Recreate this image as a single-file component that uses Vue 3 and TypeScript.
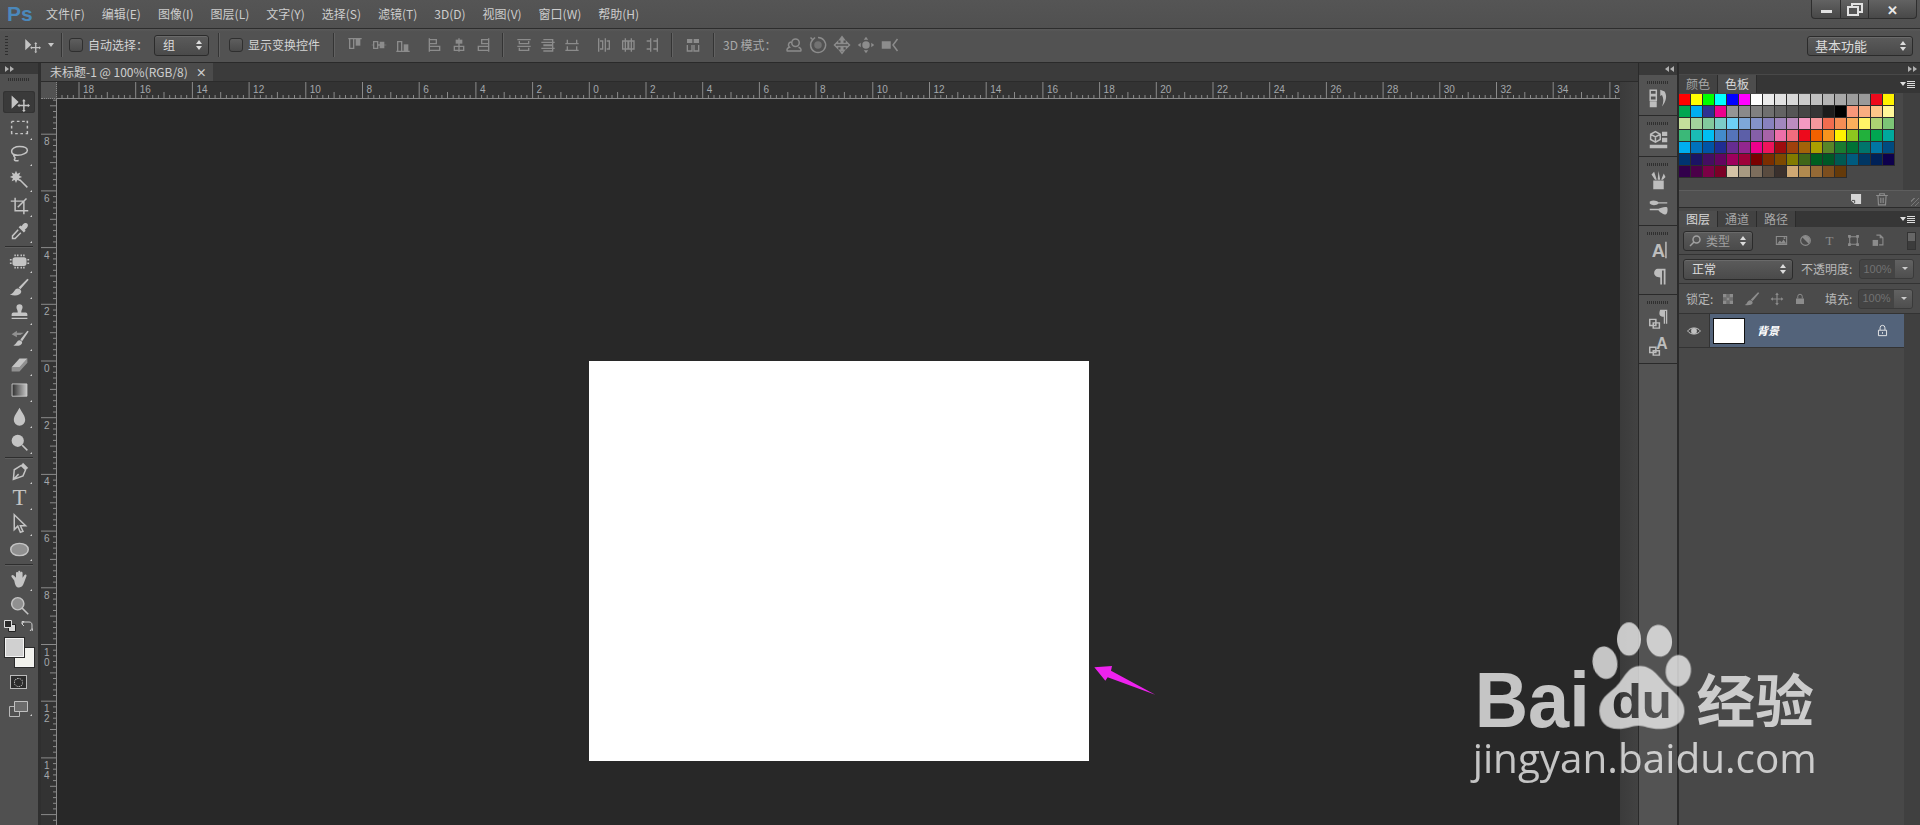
<script setup lang="ts">
import { computed, h } from 'vue'

type Ico = { f?: string; m?: string; s?: string; g?: string; t?: string; ts?: number; ty?: number; serif?: boolean }

const Icon = (p: { i: Ico; size?: number }) => {
  const kids: any[] = []
  if (p.i.g) kids.push(h('path', { d: p.i.g, fill: 'url(#ps-grad)', stroke: '#cfcfcf', 'stroke-width': 1 }))
  if (p.i.m) kids.push(h('path', { d: p.i.m, class: 'm' }))
  if (p.i.f) kids.push(h('path', { d: p.i.f, class: 'f' }))
  if (p.i.s) kids.push(h('path', { d: p.i.s, class: 's' }))
  if (p.i.t)
    kids.push(
      h('text', { x: p.i.ty && p.i.ty < 0 ? 16 : 12, y: Math.abs(p.i.ty ?? 18), 'font-size': p.i.ts ?? 20, class: p.i.serif ? 'tx serif' : 'tx' }, p.i.t)
    )
  return h('svg', { class: 'ico', viewBox: '0 0 24 24', width: p.size ?? 24, height: p.size ?? 24 }, kids)
}
Icon.props = ['i', 'size']

const menus = ['文件(F)', '编辑(E)', '图像(I)', '图层(L)', '文字(Y)', '选择(S)', '滤镜(T)', '3D(D)', '视图(V)', '窗口(W)', '帮助(H)']

const moveIcon: Ico = { f: 'M3 4v15l8-7.5zM17 8l-2 2.5h4zM17 23l-2-2.5h4zM9.5 15.500l2.500-2v4zM24 15.500l-2.500-2v4z', s: 'M17 10v11M11.500 15.500h11' }

const tools: { i: Ico; tri?: boolean; sel?: boolean; sep?: boolean }[] = [
  { i: moveIcon, sel: true },
  { i: { s: 'M3 5h3M9 5h3M15 5h3M20 5h1v2M21 10v3M21 16v3h-2M16 19h-3M10 19H7M4 19H3v-3M3 13v-3M3 7V5' }, tri: true },
  { i: { s: 'M12 4c6 0 9 2 9 4.500S16 14 10 14 3 11.500 3 9s4-5 9-5zM6 13c-2 2 1 3 1 4s-2 2 0 3 3 0 4 0' }, tri: true },
  { i: { f: 'M8 2l1.500 3.500L13 4l-1.500 3.500L15 9l-3.500 1.500L13 14l-3.500-1.500L8 16l-1.500-3.500L3 14l1.500-3.500L1 9l3.500-1.500L3 4l3.500 1.500z', s: 'M12 12l9 9' }, tri: true },
  { i: { s: 'M7 3v15h15M2 7h15v15M20 4L10 14' }, tri: true },
  { i: { f: 'M15 5c2-3 5-3 6-2s1 4-2 6l-1 1 1 1-2 2-6-6 2-2 1 1z', s: 'M10.500 10L4 17v3h3l6.500-6.500' }, tri: true },
  { i: {}, sep: true },
  { i: { f: 'M7 7h10a3 3 0 013 3v4a3 3 0 01-3 3H7a3 3 0 01-3-3v-4a3 3 0 013-3z', s: 'M7 4v2M10 4v2M14 4v2M17 4v2M7 18v2M10 18v2M14 18v2M17 18v2M1 10h2M1 14h2M21 10h2M21 14h2' }, tri: true },
  { i: { f: 'M10 13c-4 0-4 6-9 7 6 2 12 1 13-3 .3-2-2-4-4-4zM11 12l10-10 1.500 1L13 14z' }, tri: true },
  { i: { f: 'M12 2.500a3.500 3.500 0 013.500 3.500c0 2-1.500 3-1.500 6h5a2 2 0 012 2v2H3v-2a2 2 0 012-2h5c0-3-1.500-4-1.500-6A3.500 3.500 0 0112 2.500zM3 18h18v1.500H3z' }, tri: true },
  { i: { f: 'M12 14c-3 0-3 4-7 6 5 1 9 0 10-3 .3-1.500-1.500-3-3-3zM13 13l8-10 1.500 1-7.500 11z', m: 'M3 7l6-4v2.500h8L13 8H9v2.500z' }, tri: true },
  { i: { f: 'M3 15L12 5h9l-9 10z', m: 'M3 15h9v5H3zM12 15l9-10v5l-9 10z' }, tri: true },
  { i: { g: 'M3.500 4.500h17v14h-17z' }, tri: true },
  { i: { f: 'M12 2c3 6 6.500 9 6.500 14a6.500 6.500 0 01-13 0c0-5 3.500-8 6.500-14z' }, tri: true },
  { i: { f: 'M10 3a7 7 0 110 14 7 7 0 010-14z', s: 'M15 15l6 6' }, tri: true },
  { i: {}, sep: true },
  { i: { f: 'M16 2l6 6-3 2-5-5z', s: 'M14 5l5 5-3 7-11 4 1-11zM5.500 20.500L11 15' }, tri: true },
  { i: { t: 'T', ts: 26, ty: 21, serif: true }, tri: true },
  { i: { s: 'M6 2v17l4-4 3 7 3-1-3-6.500h6z' }, tri: true },
  { i: { s: 'M12 5c6 0 10 3 10 7s-4 7-10 7-10-3-10-7 4-7 10-7z', m: 'M12 5c6 0 10 3 10 7s-4 7-10 7-10-3-10-7 4-7 10-7z' }, tri: true },
  { i: {}, sep: true },
  { i: { f: 'M6 13l-3-4c-1-2 1-3 2.500-1.500L8 10V5c0-2 2.500-2 2.500 0v4V3.500c0-2 2.500-2 2.500 0V9V4.500c0-2 2.500-2 2.500 0V10l2-3c1-1.500 3-.5 2.500 1L17 16c-1 3-2.500 5-5.500 5S7 19 6 13z' }, tri: true },
  { i: { m: 'M10 3a7 7 0 110 14 7 7 0 010-14z', s: 'M10 3a7 7 0 110 14 7 7 0 010-14zM15 15l7 7' } }
]

const alignIcons: Ico[] = [
  { s: 'M2 2.500h20M4 3v14h6V3', f: 'M13 3h7v10h-7z' },
  { s: 'M4 7h6v10H4zM10 12h4', f: 'M13 7h7v10h-7zM1 11.500h3v1H1zM20 11.500h3v1h-3z' },
  { s: 'M2 21.500h20M4 21V7h6v14', f: 'M13 11h7v10h-7z' },
  { s: 'M3.500 2v20M4 4h10v6H4M4 14h15v6H4' },
  { s: 'M12 2v20M5 14h14v6H5z', f: 'M7 4h10v6H7z' },
  { s: 'M20.500 2v20M20 4H10v6h10M20 14H5v6h15' }
]
const distIcons: Ico[] = [
  { s: 'M2 4h20M2 14h20M5 6v4h14V6M5 16v4h14v-4' },
  { s: 'M2 8h20M2 17h20M5 4h14v8H5M5 13h14v8H5' },
  { s: 'M2 10h20M2 20h20M5 4v6h14V4M5 14v6h14v-6' },
  { s: 'M4 2v20M14 2v20M6 6h4v12H6M16 6h4v12h-4' },
  { s: 'M8 2v20M17 2v20M4 6h8v12H4zM13 6h8v12h-8z' },
  { s: 'M10 2v20M20 2v20M4 6h6v12H4M14 6h6v12h-6' }
]
const autoAlign: Ico = { f: 'M3 3h8v6H3zM13 3h8v6h-8z', s: 'M3.500 12v9h7v-9M13.500 12v9h7v-9' }
const threeD: Ico[] = [
  { s: 'M14 4a5 5 0 110 10 5 5 0 010-10zM8 8a4 4 0 00-2 7c-3 1-4 3-3 5h18c1-2 0-4-3-5' },
  { s: 'M12 2a10 10 0 11-7 3M2 2l3 3 3-3', m: 'M12 7a5 5 0 110 10 5 5 0 010-10z' },
  { s: 'M12 1l3 4h-2v5h5V8l4 4-4 4v-2h-5v5h2l-3 4-3-4h2v-5H6v2l-4-4 4-4v2h5V5H9z' },
  { f: 'M12 1l3 4H9zM12 23l3-4H9zM1 12l4-3v6zM23 12l-4-3v6zM12 7a5 5 0 110 10 5 5 0 010-10z' },
  { f: 'M1 7h12v10H1z', s: 'M22 4l-6 8 6 8' }
]

const dockGroups: { h: string; items: Ico[] }[] = [
  { h: 'short', items: [{ f: 'M2 15h8v7H2zM14 2l5 2c3 5 2 11-3 17 2-5 2-9 0-13l-2 1z', s: 'M2.500 2.500h7v5h-7zM2.500 9h7v5h-7z' }] },
  { h: 'short', items: [{ s: 'M3 6l5.500-3L14 6v6l-5.500 3L3 12zM3 6l5.500 3L14 6M8.500 9v6', f: 'M16 3h6v5h-6zM16 10h6v5h-6zM2 18h20v4H2z' }] },
  {
    h: 'tall',
    items: [
      { f: 'M6 12h12v10H6zM7 2l3 9H8L4 5zM12 1l2 10h-3zM18 4l2 4-3 3h-2z' },
      { f: 'M2 5c4-2 8-1 10 1h10v1.500H12c-2 2-7 3-10 0zM22 12c1 3 0 8-2 8s-7-3-8-5H2v-1.500h10c2-1 8-3 10-1.500z' }
    ]
  },
  {
    h: 'tall',
    items: [
      { t: 'A', ts: 21, ty: 20, s: 'M20.500 3v19' },
      { f: 'M11 3h9v18h-2V5h-2v16h-2V13c-4 0-7-2-7-5s2-5 4-5z' }
    ]
  },
  {
    h: 'tall',
    items: [
      { f: 'M14 2h8v16h-1.500V3.500h-1V18H18v-8c-4 0-5-2-5-4s1-4 1-4z', s: 'M2 13h7v7H2zM6 17h7v6H6z' },
      { t: 'A', ts: 18, ty: -16, s: 'M2 14h7v6H2zM6 18h7v5H6z' }
    ]
  }
]

const swatches: string[] = (
  '#ff0000,#ffff00,#00ff00,#00ffff,#0000ff,#ff00ff,#ffffff,#ebebeb,#e1e1e1,#d7d7d7,#cbcbcb,#c0c0c0,#b4b4b4,#a8a8a8,#9c9c9c,#9a9a9a,#ed0a1c,#fff200,' +
  '#00a651,#00aeef,#2e3192,#ec008c,#959595,#8a8a8a,#808080,#6f6f6f,#636363,#555555,#464646,#363636,#1c1c1c,#000000,#f7977a,#f9ad81,#fdc68a,#fff79a,' +
  '#c4df9b,#a3d39c,#82ca9d,#7bcdc8,#6ecff6,#7ea7d8,#8493ca,#8882be,#a187be,#bc8dbf,#f49ac2,#f6989d,#f26c4f,#f68e55,#fbaf5c,#fff467,#acd372,#7cc576,' +
  '#3bb878,#1abbb4,#00bff3,#438ccb,#5574b9,#5c5fa8,#855fa8,#a763a8,#ee6fa9,#f16d7e,#ed0a1c,#f26100,#f7941d,#fff200,#8dc61e,#22b13c,#00a651,#00a99d,' +
  '#00aeef,#0072bc,#0054a6,#1f2d92,#662d91,#92278f,#ec008c,#ed145b,#9e0b0f,#a0410d,#a36209,#aba000,#598527,#1a7b30,#007236,#00746b,#0076a3,#004b80,' +
  '#003471,#1b1464,#440e62,#630460,#9e005d,#9e0039,#790000,#7b2e00,#7d4900,#827b00,#406618,#005e20,#005826,#005952,#005b7f,#003663,#002157,#0d004c,' +
  '#32004b,#4b0049,#7b0046,#7a0026,#d4c3a6,#a89a82,#7d6e5d,#594b3f,#3a302c,#cfa873,#b18a4f,#956a36,#7c4e1e,#643a0a'
).split(',')

const filterIcons: Ico[] = [
  { s: 'M2.500 4.500h19v15h-19z', f: 'M4 18l5-6 3 3 4-5 5 8zM16 6h3v3h-3z' },
  { s: 'M12 3a9 9 0 110 18 9 9 0 010-18z', f: 'M12 3a9 9 0 016 15L6 6a9 9 0 016-3z' },
  { t: 'T', ts: 24, ty: 20, serif: true },
  { s: 'M5 5h14v14H5z', f: 'M2 2h5v5H2zM17 2h5v5h-5zM2 17h5v5H2zM17 17h5v5h-5z' },
  { f: 'M3 11h10v11H3z', s: 'M10 2h7l5 5v13h-7M17 2v5h5' }
]
const lockChecker: Ico = { f: 'M2 2h7v7H2zM9 9h6v6H9zM15 2h7v7h-7zM2 15h7v7H2zM15 15h7v7h-7z', m: 'M9 2h6v7H9zM2 9h7v6H2zM15 9h7v6h-7zM9 15h6v7H9z' }
const lockBrush: Ico = { f: 'M9 14c-4 0-4 6-8 7 6 1 11 0 12-3 .3-2-2-4-4-4zM10 13L21 2l2 1-10 12z' }
const lockMove: Ico = { f: 'M12 1l3 4H9zM12 23l3-4H9zM1 12l4-3v6zM23 12l-4-3v6z', s: 'M12 4v16M4 12h16' }
const lockIcon: Ico = { f: 'M4 11h16v11H4z', s: 'M7.500 11V7a4.500 4.500 0 019 0v4' }
const lockLine: Ico = { s: 'M4.500 11.500h15v10h-15zM7.500 11V7a4.500 4.500 0 019 0v4M12 15v3' }
const eye: Ico = { s: 'M1 12c5-7 17-7 22 0-5 7-17 7-22 0z', f: 'M12 7a5 5 0 110 10 5 5 0 010-10z' }

const ZERO = 589.3
const STEP = 5.67
const hTicks = computed(() => {
  let d = ''
  for (let n = -94; n <= 182; n++) {
    const x = ZERO - 57 + n * STEP
    if (x < 0) continue
    const len = n % 10 === 0 ? 17 : n % 5 === 0 ? 6 : 3
    d += `M${x.toFixed(1)} 16V${16 - len}`
  }
  return d + 'M0 16.500H1563'
})
const hLabels = computed(() => {
  const out: { x: number; v: number }[] = []
  for (let v = -18; v <= 36; v += 2) out.push({ x: ZERO - 57 + (v / 2) * 56.7 + 4, v: Math.abs(v) })
  return out
})
const vTicks = computed(() => {
  let d = ''
  for (let n = -46; n <= 82; n++) {
    const y = 361 - 99 + n * STEP
    if (y < 0) continue
    const len = n % 10 === 0 ? 16 : n % 5 === 0 ? 7 : 4
    d += `M16 ${y.toFixed(1)}H${16 - len}`
  }
  return d + 'M15.500 0V726'
})
const vLabels = computed(() => {
  const out: { y: number; c: string }[] = []
  for (let v = -8; v <= 14; v += 2) {
    const y0 = 361 - 99 + (v / 2) * 56.7
    String(Math.abs(v))
      .split('')
      .forEach((c, k) => out.push({ y: y0 + 11 + k * 10, c }))
  }
  return out
})
</script>

<template>
  <div class="ps">
    <svg class="defs" width="0" height="0">
      <defs>
        <linearGradient id="ps-grad" x1="0" x2="1" y1="0" y2="0">
          <stop offset="0" stop-color="#2e2e2e" />
          <stop offset="1" stop-color="#c8c8c8" />
        </linearGradient>
      </defs>
    </svg>

    <header class="menubar">
      <span class="logo">Ps</span>
      <nav class="menus">
        <span v-for="m in menus" :key="m">{{ m }}</span>
      </nav>
      <div class="winbtns">
        <span class="wb first"><i class="min"></i></span>
        <span class="wb"><i class="rest a"></i><i class="rest b"></i></span>
        <span class="wb last close">✕</span>
      </div>
    </header>

    <section class="options">
      <i class="vgrip"></i>
      <span class="optmove"><Icon :i="moveIcon" :size="18" /></span>
      <i class="caret"></i>
      <i class="osep s1"></i>
      <label class="chk"></label>
      <span class="lbl auto">自动选择：</span>
      <span class="combo group">组<i class="updown"></i></span>
      <i class="osep s2"></i>
      <label class="chk c2"></label>
      <span class="lbl">显示变换控件</span>
      <i class="osep s3"></i>
      <span class="btns first">
        <Icon v-for="(a, n) in alignIcons" :key="n" :i="a" :size="16" class="dim" :class="{ wide: n === 2 }" />
      </span>
      <i class="osep s4"></i>
      <span class="btns">
        <Icon v-for="(a, n) in distIcons" :key="n" :i="a" :size="16" class="dim" :class="{ wide: n === 2 }" />
      </span>
      <i class="osep s5"></i>
      <Icon :i="autoAlign" :size="16" class="dim auto-al" />
      <i class="osep s6"></i>
      <span class="lbl three">3D 模式：</span>
      <span class="btns d3">
        <Icon v-for="(a, n) in threeD" :key="n" :i="a" :size="18" class="dim" />
      </span>
      <span class="combo work-combo">基本功能<i class="updown"></i></span>
    </section>

    <main class="work">
      <aside class="toolbar">
        <div class="collapse"><i class="arr r"></i><i class="arr r"></i></div>
        <i class="grip"></i>
        <div class="tools">
          <template v-for="(t, n) in tools" :key="n">
            <i v-if="t.sep" class="tsep"></i>
            <div v-else class="tool" :class="{ sel: t.sel, tri: t.tri }"><Icon :i="t.i" :size="21" /></div>
          </template>
        </div>
        <div class="minis">
          <svg class="mini" viewBox="0 0 12 12" width="12" height="12">
            <path d="M4.500 4.500h7v7h-7z" fill="#d8d8d8" stroke="#222" />
            <path d="M.5.500h7v7h-7z" fill="#2a2a2a" stroke="#ddd" />
          </svg>
          <svg class="mini" viewBox="0 0 12 12" width="12" height="12">
            <path d="M1 4V1.500h2L1 4l2 2M1 2h7c2 0 3 1 3 3v4M9 11l2-2.500M11 11l1-2.500" fill="none" stroke="#cfcfcf" />
          </svg>
        </div>
        <div class="colors">
          <span class="bgc"></span>
          <span class="fgc"></span>
        </div>
        <div class="qmask"><i></i></div>
        <div class="screen tri">
          <svg viewBox="0 0 20 16" width="20" height="16">
            <path d="M.5 5.500h10v10H.5z" fill="none" stroke="#b8b8b8" />
            <path d="M5.500.5h13v10h-13z" fill="#6b6b6b" stroke="#c0c0c0" />
          </svg>
        </div>
      </aside>

      <section class="doc">
        <div class="tabs">
          <div class="tab">未标题-1 @ 100%(RGB/8)<span class="x">×</span></div>
        </div>
        <div class="corner"></div>
        <svg class="hruler" width="1563" height="17">
          <path :d="hTicks" class="tick" />
          <text v-for="l in hLabels" :key="l.x" :x="l.x" y="11" class="rl">{{ l.v }}</text>
        </svg>
        <div class="gutter"></div>
        <svg class="vruler" width="16" height="726">
          <path :d="vTicks" class="tick" />
          <text v-for="l in vLabels" :key="l.y" x="3" :y="l.y" class="rl">{{ l.c }}</text>
        </svg>
        <div class="canvas">
          <div class="sheet"></div>
          <svg class="arrow" viewBox="0 0 360 240" width="120" height="80">
            <polygon points="103,82 156,78 153,92 286,164 143,112 136,122" fill="#ee22ee" />
          </svg>
        </div>
      </section>

      <aside class="dock">
        <div class="dockhead"><i class="arr l"></i><i class="arr l"></i></div>
        <div v-for="(g, n) in dockGroups" :key="n" class="dgroup" :class="g.h">
          <i class="grip"></i>
          <div v-for="(it, k) in g.items" :key="k" class="ditem"><Icon :i="it" :size="21" /></div>
        </div>
      </aside>

      <aside class="panels">
        <div class="phead"><i class="arr r"></i><i class="arr r"></i></div>
        <div class="ptabs">
          <span class="ptab">颜色</span>
          <span class="ptab on">色板</span>
          <span class="pmenu"><i class="caret"></i><i class="bars"></i></span>
        </div>
        <div class="swbody">
          <div class="swgrid">
            <i v-for="(c, n) in swatches" :key="n" :style="{ background: c }"></i>
          </div>
          <div class="scroll"></div>
        </div>
        <div class="swfoot">
          <svg viewBox="0 0 12 12" width="11" height="11"><path d="M0 0h11v11H4L0 7z" fill="#d5d5d5" /><path d="M1 7h3v3" fill="none" stroke="#444" /></svg>
          <Icon :i="{ s: 'M2 6h20M8 6V3h8v3M5 6l1 16h12l1-16M10 10v9M14 10v9' }" :size="14" class="dim" />
          <i class="resize"></i>
        </div>

        <div class="ptabs layers">
          <span class="ptab on">图层</span>
          <span class="ptab">通道</span>
          <span class="ptab">路径</span>
          <span class="pmenu"><i class="caret"></i><i class="bars"></i></span>
        </div>
        <div class="row filter">
          <span class="combo kind">
            <svg viewBox="0 0 12 12" width="12" height="12"><path d="M7.500 1a3.500 3.500 0 110 7 3.500 3.500 0 010-7zM5 7l-4 4" fill="none" stroke="#a0a0a0" stroke-width="1.500" /></svg>
            <b>类型</b><i class="updown"></i>
          </span>
          <span class="ficons"><Icon v-for="(a, n) in filterIcons" :key="n" :i="a" :size="13" class="dim" /></span>
          <span class="toggle"></span>
        </div>
        <div class="row blend">
          <span class="combo mode">正常<i class="updown"></i></span>
          <span class="rlabel op">不透明度:</span>
          <span class="numbox"><b>100%</b><i class="drop"></i></span>
        </div>
        <div class="row lock">
          <span class="rlabel">锁定:</span>
          <span class="lockicons">
            <Icon :i="lockChecker" :size="12" class="dim" />
            <Icon :i="lockBrush" :size="16" class="dim" />
            <Icon :i="lockMove" :size="14" class="dim" />
            <Icon :i="lockIcon" :size="12" class="dim" />
          </span>
          <span class="rlabel fill">填充:</span>
          <span class="numbox"><b>100%</b><i class="drop"></i></span>
        </div>
        <div class="layerarea">
          <div class="layers-list">
            <div class="layer">
              <span class="eyecol"><Icon :i="eye" :size="14" /></span>
              <div class="lrow">
                <span class="thumb"></span>
                <em>背景</em>
                <Icon :i="lockLine" :size="13" class="llock" />
              </div>
            </div>
          </div>
          <div class="scroll"></div>
        </div>
      </aside>
    </main>

    <svg class="wm" width="480" height="235">
      <defs>
        <mask id="pawmask">
          <rect width="480" height="235" fill="#fff" />
          <text x="171.700" y="128.300" font-size="48.700" class="du" textLength="60" lengthAdjust="spacingAndGlyphs">du</text>
        </mask>
      </defs>
      <g class="wmg">
        <text x="34.700" y="136.700" font-size="77.300" class="bai" textLength="115" lengthAdjust="spacingAndGlyphs">Bai</text>
        <g mask="url(#pawmask)">
          <g transform="scale(.3333)">
            <ellipse cx="567" cy="147" rx="36" ry="50" />
            <ellipse cx="658" cy="152" rx="38" ry="48" transform="rotate(-8 658 152)" />
            <ellipse cx="495" cy="218" rx="37" ry="49" transform="rotate(-10 495 218)" />
            <ellipse cx="715" cy="242" rx="38" ry="47" transform="rotate(6 715 242)" />
            <path d="M600 228c40 0 60 40 85 62 30 28 48 45 48 72 0 40-40 55-75 55-30 0-45-10-62-10-20 0-35 10-62 10-35 0-56-22-56-55 0-35 25-50 50-72 25-25 35-62 72-62z" />
          </g>
        </g>
        <text x="256.500" y="132.300" font-size="57.300" class="cn" textLength="117.300" lengthAdjust="spacingAndGlyphs">经验</text>
        <text x="32.700" y="182.500" font-size="39.300" class="url" textLength="344" lengthAdjust="spacingAndGlyphs">jingyan.baidu.com</text>
      </g>
    </svg>
  </div>
</template>

<style>
body { background: #282828; overflow: hidden; }
.ico { display: block; flex: none; overflow: visible; }
.ico .f { fill: currentColor; }
.ico .m { fill: currentColor; opacity: .55; }
.ico .s { fill: none; stroke: currentColor; stroke-width: 1.7; }
.ico .tx { fill: currentColor; text-anchor: middle; font-family: "Liberation Sans", sans-serif; font-weight: 700; }
.ico .tx.serif { font-family: "Liberation Serif", serif; font-weight: 400; }
.ico.dim { color: #8c8c8c; }
.ico.dim .s { stroke-width: 2; }
</style>

<style scoped>
.ps { position: relative; width: 1920px; height: 825px; overflow: hidden; display: flex; flex-direction: column; background: #535353; color: #c8c8c8; font-family: "Noto Sans CJK SC", "Liberation Sans", sans-serif; font-size: 12px; line-height: 1; }
.ps i { display: block; font-style: normal; }
.defs { position: absolute; }

/* menu */
.menubar { height: 28px; flex: none; display: flex; align-items: center; background: linear-gradient(#555, #505050); border-bottom: 1px solid #2d2d2d; }
.logo { margin-left: 7px; width: 33px; font: 700 21px "Liberation Sans", sans-serif; color: #4b88bb; }
.menus { display: flex; gap: 17px; margin-left: 6px; color: #cdcdcd; }
.winbtns { margin-left: auto; margin-right: 3px; align-self: flex-start; display: flex; height: 18px; border: 1px solid #2e2e2e; border-top: 0; border-radius: 0 0 4px 4px; background: linear-gradient(#626262, #484848); }
.wb { position: relative; display: flex; align-items: center; justify-content: center; width: 27px; border-left: 1px solid #2e2e2e; color: #e8e8e8; }
.wb.first { border-left: 0; width: 28px; }
.wb.last { width: 47px; font-size: 13px; font-weight: 700; }
.min { width: 11px; height: 3px; background: #e2e2e2; margin-top: 5px; }
.rest { position: absolute; border: 2px solid #e2e2e2; width: 8px; height: 6px; }
.rest.a { left: 10px; top: 3px; }
.rest.b { left: 6px; top: 6px; background: #555; }

/* options */
.options { height: 34px; flex: none; display: flex; align-items: center; padding: 0 7px 1px 5px; background: linear-gradient(#5a5a5a, #525252 8%, #525252); border-bottom: 1px solid #2a2a2a; box-sizing: border-box; }
.vgrip { width: 3px; height: 19px; background: repeating-linear-gradient(#2f2f2f 0 1px, transparent 1px 3px); }
.optmove { margin-left: 15px; color: #c4c4c4; }
.caret { width: 0; height: 0; border: 3px solid transparent; border-top: 4px solid #c8c8c8; border-bottom: 0; }
.options > .caret { margin-left: 7px; }
.osep { width: 1px; height: 24px; background: #343434; box-shadow: 1px 0 0 #626262; flex: none; }
.s1 { margin-left: 7px; }
.chk { width: 14px; height: 14px; box-sizing: border-box; border: 1px solid #2f2f2f; border-radius: 3px; background: linear-gradient(#5e5e5e, #4a4a4a); margin-left: 7px; }
.chk.c2 { margin-left: 10px; }
.lbl { margin-left: 5px; color: #d4d4d4; white-space: nowrap; }
.lbl.auto { width: 62px; }
.combo { position: relative; box-sizing: border-box; display: flex; align-items: center; border: 1px solid #2b2b2b; border-radius: 3px; background: linear-gradient(#5b5b5b, #4a4a4a); box-shadow: inset 0 1px 0 #6a6a6a; color: #dcdcdc; }
.group { width: 55px; height: 21px; padding-left: 8px; margin-left: 4px; }
.updown { position: absolute; right: 5px; top: 50%; margin-top: -5px; width: 7px; height: 10px; }
.updown::before, .updown::after { content: ""; position: absolute; left: 0; border: 3.5px solid transparent; }
.updown::before { border-bottom: 4px solid #dcdcdc; border-top: 0; top: 0; }
.updown::after { bottom: 0; border-top: 4px solid #dcdcdc; border-bottom: 0; }
.s2 { margin-left: 9px; }
.s3 { margin-left: 13px; }
.btns { display: flex; gap: 8px; margin-left: 13px; }
.btns .wide { margin-right: 8px; }
.s4 { margin-left: 11px; }
.s5 { margin-left: 11px; }
.auto-al { margin-left: 13px; }
.s6 { margin-left: 12px; }
.three { color: #a8a8a8; margin-left: 9px; width: 53px; }
.d3 { gap: 6px; margin-left: 9px; }
.work-combo { margin-left: auto; margin-top: 1px; width: 106px; height: 20px; padding-left: 7px; font-size: 13px; }

/* work */
.work { flex: 1; display: flex; min-height: 0; }
.toolbar { width: 38px; flex: none; background: #505050; border-right: 3px solid #2f2f2f; display: flex; flex-direction: column; align-items: stretch; }
.collapse { height: 11px; background: #393939; display: flex; align-items: center; gap: 1px; padding-left: 5px; }
.arr { width: 0; height: 0; border: 3px solid transparent; }
.arr.r { border-left: 4px solid #b0b0b0; border-right: 0; }
.arr.l { border-right: 4px solid #b0b0b0; border-left: 0; }
.grip { height: 3px; width: 22px; margin: 4px auto 0; background: repeating-linear-gradient(90deg, #2f2f2f 0 1px, transparent 1px 2px); }
.tools { display: flex; flex-direction: column; margin-top: 8.2px; color: #c4c4c4; }
.tool { position: relative; height: 25.85px; flex: none; display: flex; align-items: center; justify-content: center; }
.tool.sel { margin: 2px 3px 1.85px; height: 22px; background: #3a3a3a; border-radius: 3px; box-shadow: inset 0 0 0 1px #333; }
.tri::after { content: ""; position: absolute; right: 6px; bottom: 1px; border: 1.500px solid transparent; border-right-color: #d0d0d0; border-bottom-color: #d0d0d0; }
.tsep { height: 1px; margin: 2px 5px 1px; background: #2e2e2e; flex: none; box-shadow: 0 1px 0 #5e5e5e; }
.minis { height: 16px; display: flex; justify-content: space-between; align-items: center; padding: 0 5px 0 4px; }
.colors { position: relative; height: 33px; margin-top: 4px; }
.fgc, .bgc { position: absolute; width: 17px; height: 17px; border: 1px solid #f4f4f4; box-shadow: 0 0 0 1px #2a2a2a; }
.fgc { left: 5px; top: 0; background: #d0d0d0; }
.bgc { left: 15px; top: 10px; background: #f1f1ec; }
.qmask { margin: 4px 0 0 10px; width: 15px; height: 12px; border: 1px solid #bbb; background: #2c2c2c; display: flex; align-items: center; justify-content: center; }
.qmask i { width: 7px; height: 7px; border: 1px dotted #ddd; border-radius: 50%; }
.screen { position: relative; margin-top: 12px; display: flex; justify-content: center; height: 16px; }

.doc { width: 1597px; flex: none; display: grid; grid-template-columns: 16px 1563px 18px; grid-template-rows: 19px 17px 1fr; }
.tabs { grid-column: 1 / -1; background: #3b3b3b; border-bottom: 1px solid #2b2b2b; box-sizing: border-box; display: flex; }
.tab { width: 172px; box-sizing: border-box; background: #4b4b4b; display: flex; align-items: center; padding-left: 9px; color: #cfcfcf; white-space: nowrap; }
.x { margin-left: 8px; font-weight: 700; font-size: 11px; }
.corner { background: #525252; border-right: 1px dotted #888; border-bottom: 1px dotted #888; box-sizing: border-box; }
.hruler, .vruler { display: block; background: #333; }
.tick { fill: none; stroke: #8a8a8a; stroke-width: 1; }
.rl { fill: #a4a8ac; font: 10px "Liberation Sans", sans-serif; }
.gutter { grid-row: 2 / 4; grid-column: 3; background: linear-gradient(90deg, #3b3b3b, #424242); }
.canvas { position: relative; background: #282828; padding: 262px 0 0 532px; overflow: hidden; }
.sheet { width: 500px; height: 400px; background: #fff; }
.arrow { position: absolute; left: 1003px; top: 541px; }

.dock { width: 38px; flex: none; border-left: 1px solid #2a2a2a; border-right: 2px solid #2a2a2a; background: #535353; display: flex; flex-direction: column; }
.dockhead { height: 12px; background: #393939; display: flex; justify-content: flex-end; align-items: center; gap: 1px; padding-right: 3px; }
.dgroup { border-bottom: 1px solid #2a2a2a; box-sizing: border-box; padding-top: 2px; color: #bdbdbd; }
.dgroup.short { height: 41px; }
.dgroup.tall { height: 69px; }
.ditem { height: 26px; display: flex; align-items: center; justify-content: center; margin-top: 1px; }

.panels { flex: 1; min-width: 0; background: #484848; display: flex; flex-direction: column; }
.phead { height: 11px; background: #393939; display: flex; justify-content: flex-end; align-items: center; gap: 1px; padding-right: 3px; }
.ptabs { height: 18px; flex: none; background: #363636; margin-top: 1px; display: flex; align-items: stretch; }
.ptabs.layers { height: 16px; margin-top: 3px; }
.ptab { width: 39px; display: flex; align-items: center; justify-content: center; color: #a6a6a6; border-right: 1px solid #2b2b2b; box-sizing: border-box; background: #424242; }
.ptab.on { background: #4d4d4d; color: #d8d8d8; }
.pmenu { margin-left: auto; margin-right: 5px; display: flex; align-items: center; gap: 1px; }
.pmenu .caret { border-top-color: #ddd; }
.bars { width: 8px; height: 7px; background: repeating-linear-gradient(#ddd 0 1px, transparent 1px 2px); }
.swbody { height: 97px; flex: none; display: flex; padding-top: 1px; box-sizing: border-box; }
.swgrid { width: 216px; height: 84px; display: grid; grid-template-columns: repeat(18, 12px); grid-auto-rows: 12px; }
.swgrid i { border-right: 1px solid #2c2c2c; border-bottom: 1px solid #2c2c2c; box-sizing: border-box; }
.scroll { margin-left: auto; width: 17px; flex: none; background: #404040; margin-top: -1px; }
.swfoot { height: 18px; flex: none; border-top: 1px solid #5e5e5e; border-bottom: 1px solid #2b2b2b; box-sizing: border-box; background: #505050; display: flex; align-items: center; padding-left: 172px; position: relative; }
.swfoot .ico { margin-left: 13px; }
.resize { position: absolute; right: 1px; bottom: 1px; width: 8px; height: 8px; background: repeating-linear-gradient(135deg, transparent 0 2px, #777 2px 3px); }
.row { flex: none; display: flex; align-items: center; border-bottom: 1px solid #333; box-sizing: border-box; background: #4b4b4b; padding-left: 4px; }
.filter { height: 28px; }
.blend { height: 29px; }
.lock { height: 30px; }
.kind { width: 70px; height: 20px; gap: 5px; padding-left: 5px; color: #a0a0a0; }
.kind b { font-weight: 400; }
.ficons { display: flex; gap: 11px; margin-left: 22px; }
.toggle { margin-left: 23px; width: 9px; height: 18px; background: linear-gradient(#666 50%, #3c3c3c 50%); border: 1px solid #333; box-sizing: border-box; }
.mode { width: 110px; height: 21px; padding-left: 8px; }
.rlabel { color: #b8b8b8; }
.op { margin-left: 8px; width: 58px; white-space: nowrap; }
.numbox { display: flex; width: 55px; height: 20px; border: 1px solid #3a3a3a; border-radius: 3px; box-sizing: border-box; background: #444; font-family: "Liberation Sans", sans-serif; overflow: hidden; }
.numbox b { font-weight: 400; font-size: 11px; width: 35px; color: #727272; display: flex; align-items: center; justify-content: center; }
.drop { flex: 1; position: relative; background: linear-gradient(#626262, #4e4e4e); }
.drop::after { content: ""; position: absolute; left: 7px; top: 7px; border: 3px solid transparent; border-top: 3px solid #ccc; border-bottom: 0; }
.lock .rlabel:first-child { margin-left: 3px; width: 30px; }
.lockicons { display: flex; gap: 10px; align-items: center; margin-left: 6px; width: 88px; }
.fill { margin-left: 15px; width: 33px; }
.layerarea { flex: 1; display: flex; }
.layers-list { flex: 1; min-width: 0; }
.layer { height: 34px; display: flex; border-bottom: 1px solid #333; box-sizing: border-box; }
.eyecol { width: 31px; display: flex; align-items: center; justify-content: center; color: #c0c0c0; border-right: 1px solid #333; box-sizing: border-box; }
.lrow { flex: 1; background: #53637a; display: flex; align-items: center; padding-left: 3px; color: #eee; }
.thumb { width: 30px; height: 24px; background: #fff; border: 1px solid #111; }
.lrow em { margin-left: 12px; font-size: 11px; font-weight: 700; color: #fff; }
.llock { margin-left: auto; margin-right: 15px; }
.layerarea .scroll { margin-top: 0; width: 16px; }

.wm { position: absolute; left: 1440px; top: 590px; pointer-events: none; }
.wmg { opacity: .78; fill: #f2f2f2; }
.bai { font-family: "Liberation Sans", sans-serif; font-weight: 700; }
.du { font-family: "Liberation Sans", sans-serif; font-weight: 700; fill: #000; }
.cn { font-family: "Noto Sans CJK SC", sans-serif; font-weight: 700; }
.url { font-family: "Open Sans", sans-serif; }
</style>
